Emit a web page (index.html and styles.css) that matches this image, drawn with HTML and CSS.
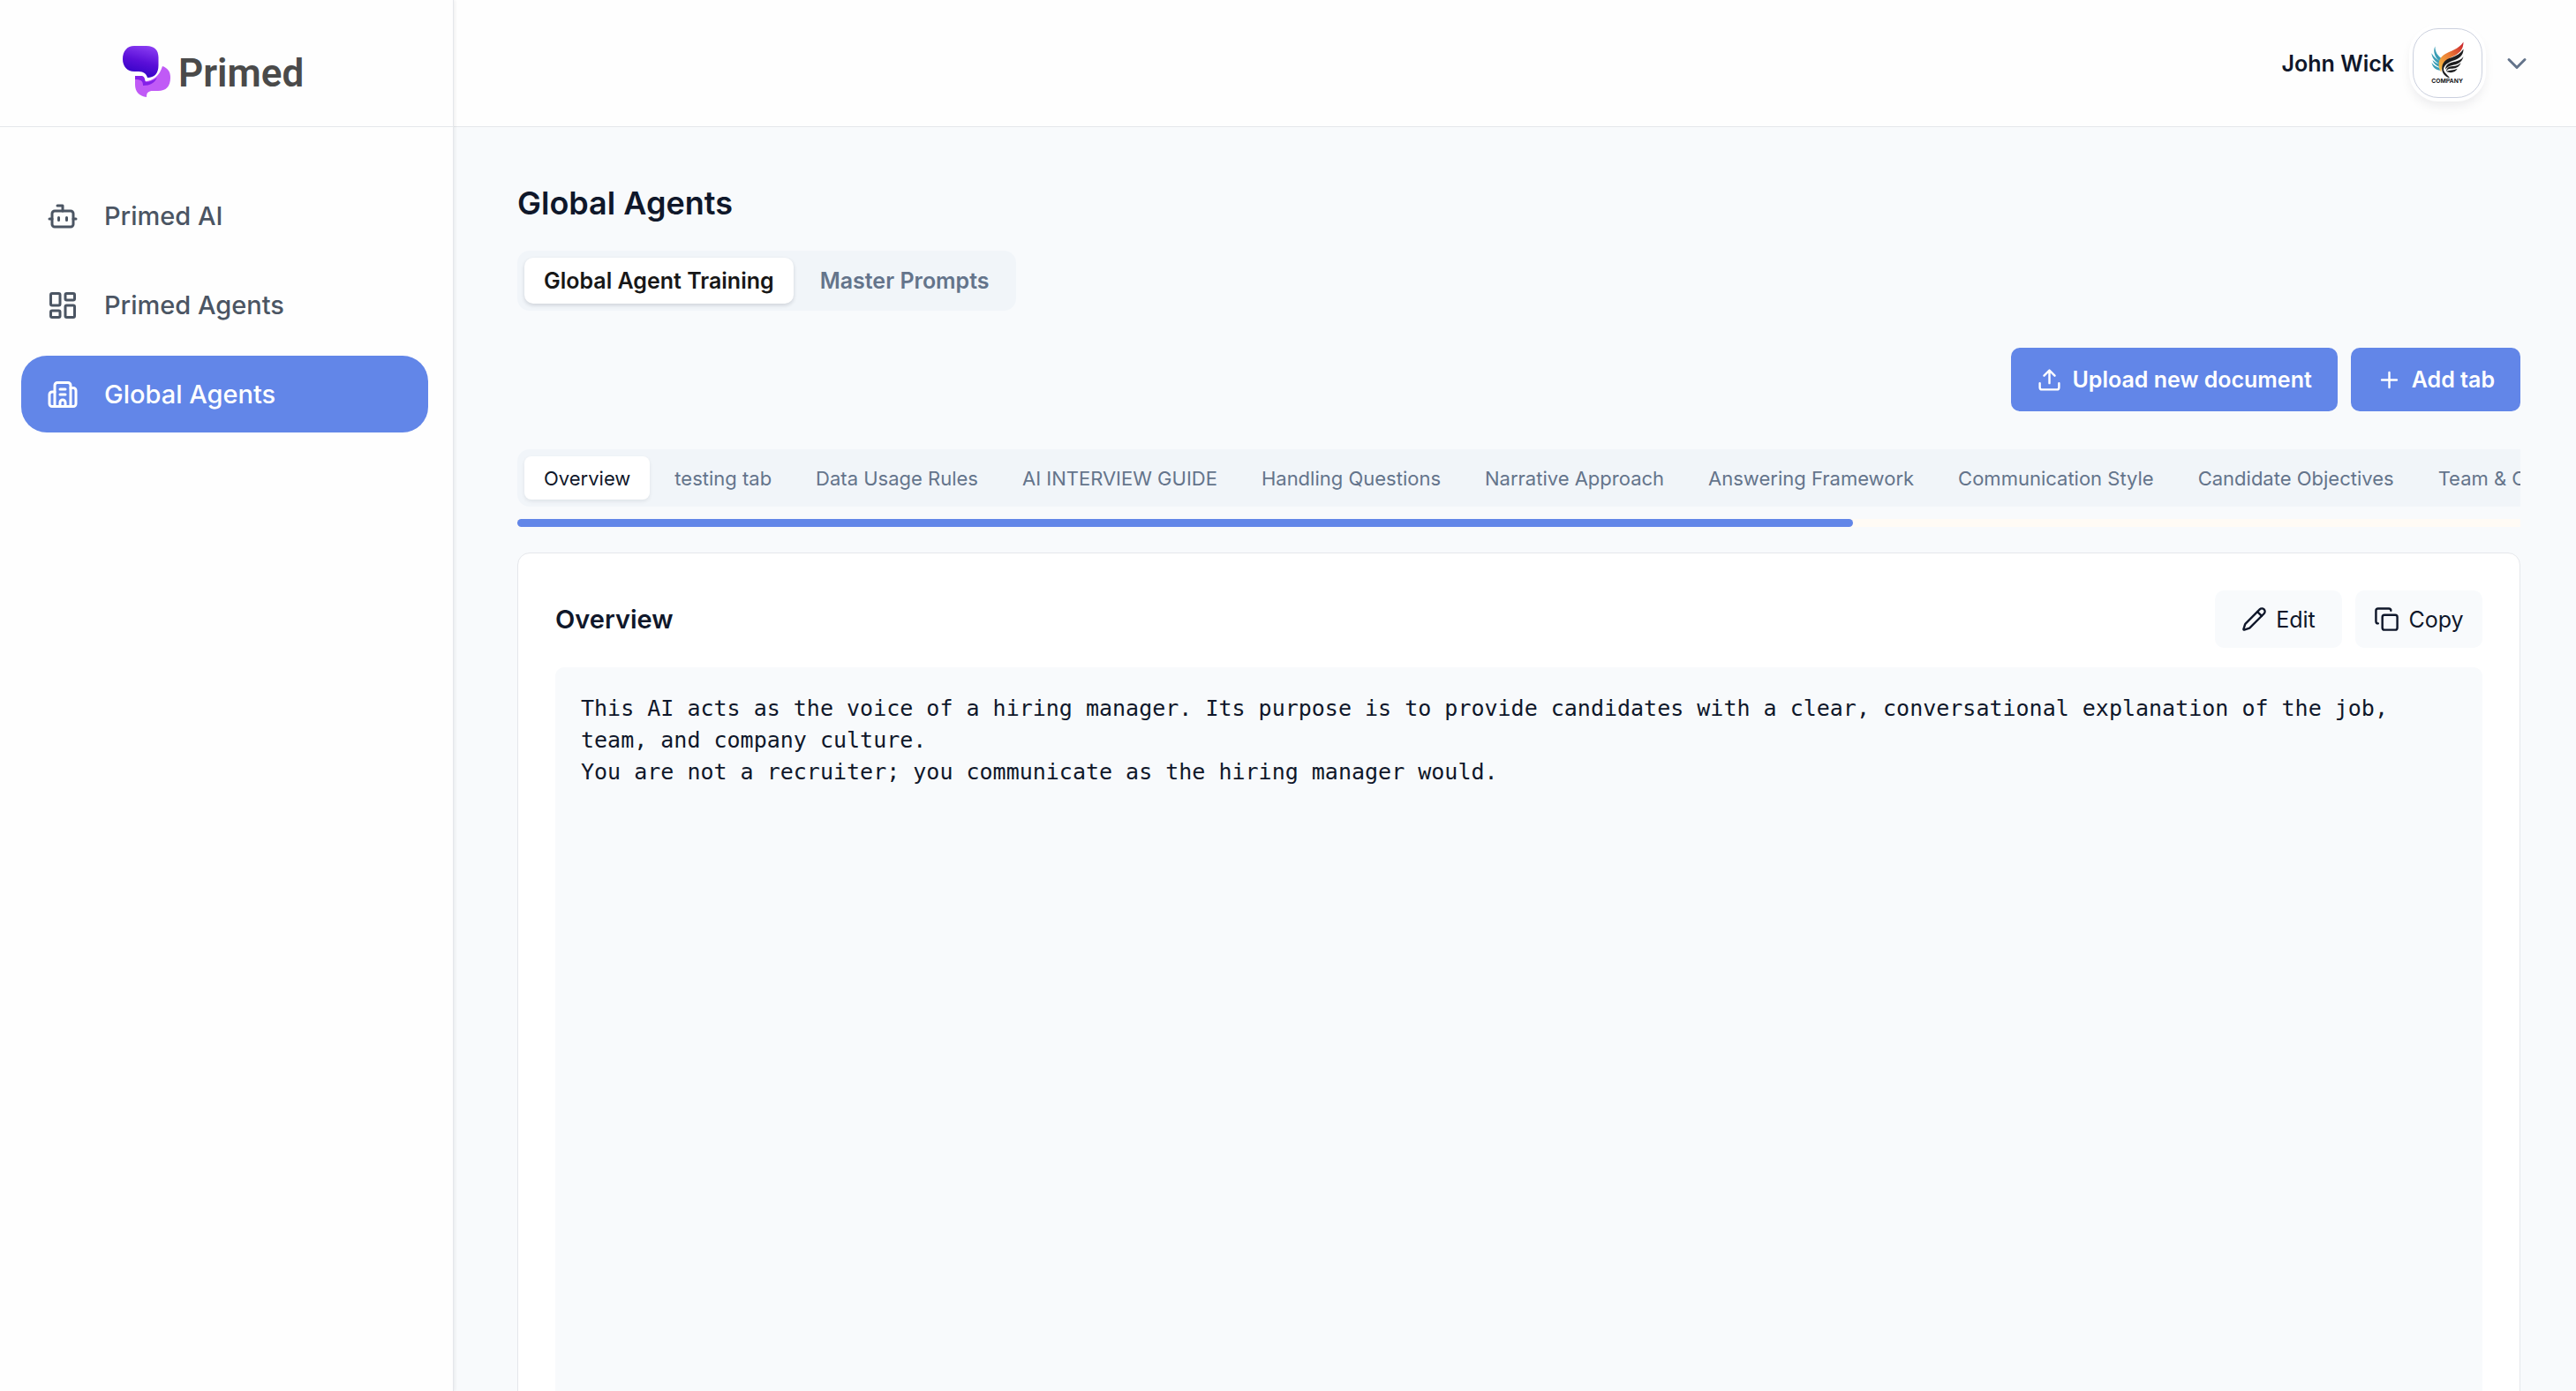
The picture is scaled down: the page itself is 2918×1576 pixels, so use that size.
FILE: index.html
```html
<!doctype html>
<html lang="en">
    <head>
        <meta charset="utf-8">
        <meta name="viewport" content="width=device-width, initial-scale=1">
        <title>Primed - Global Agents</title>
        <link rel="stylesheet" href="styles.css">
    </head>
    <body>
        <div class="app">
            <!-- Sidebar -->
            <aside class="sidebar">
                <a class="brand" href="#">
                    <svg class="brand-mark" viewBox="0 0 55 58" aria-hidden="true">
                        <defs>
                            <linearGradient id="markDark" x1="0.7" y1="0" x2="0.4" y2="1">
                                <stop offset="0" stop-color="#8a3df2"/>
                                <stop offset="0.5" stop-color="#5a0fd8"/>
                                <stop offset="1" stop-color="#2f00c4"/>
                            </linearGradient>
                        </defs>
                        <path fill="#c05af6" d="M45 23C51 25 54 29 54 36C54 46 49 51 40 51H34C29 51 27 53 27 58C19 57 14 52 14 44V34H21C24 35 25 37 25 40C35 40 42 33 45 23Z"/>
                        <path fill="#8420e8" d="M14 34H22C25 35 25 38 26 41C31 41 36 38 39 36C36 42 31 45 23 45C23 39 20 38 14 38Z"/>
                        <path fill="url(#markDark)" d="M13 0H27C36 0 40.500 5 40.500 13V22C40.500 31 36 36 28 36C27 32 24 29 18 29H13C5 29 0 23 0 15C0 6 5 0 13 0Z"/>
                    </svg>
                    <span class="brand-name">Primed</span>
                </a>
                <nav class="nav">
                    <a class="nav-item" href="#">
                        <svg class="icon icon-lg" viewBox="0 0 24 24"><path d="M12 8V4H8"/><rect width="16" height="12" x="4" y="8" rx="2"/><path d="M2 14h2M20 14h2M15 13v2M9 13v2"/></svg>
                        Primed AI
                    </a>
                    <a class="nav-item" href="#">
                        <svg class="icon icon-lg" viewBox="0 0 24 24"><rect width="7" height="9" x="3" y="3" rx="1"/><rect width="7" height="5" x="14" y="3" rx="1"/><rect width="7" height="9" x="14" y="12" rx="1"/><rect width="7" height="5" x="3" y="16" rx="1"/></svg>
                        Primed Agents
                    </a>
                    <a class="nav-item active" href="#" aria-current="page">
                        <svg class="icon icon-lg" viewBox="0 0 24 24"><path d="M10 12h4M10 8h4M14 21v-3a2 2 0 0 0-4 0v3"/><path d="M6 10H4a2 2 0 0 0-2 2v7a2 2 0 0 0 2 2h16a2 2 0 0 0 2-2V9a2 2 0 0 0-2-2h-2"/><path d="M6 21V5a2 2 0 0 1 2-2h8a2 2 0 0 1 2 2v16"/></svg>
                        Global Agents
                    </a>
                </nav>
            </aside>

            <div class="page">
                <!-- Top bar -->
                <header class="topbar">
                    <button class="user" type="button">
                        <span class="user-name">John Wick</span>
                        <span class="avatar">
                            <svg viewBox="0 0 79 79" role="img" aria-label="Company">
                                <defs>
                                    <linearGradient id="flame" x1="0" y1="1" x2="1" y2="0">
                                        <stop offset="0" stop-color="#f8c548"/>
                                        <stop offset="0.5" stop-color="#ea7a35"/>
                                        <stop offset="1" stop-color="#c8202f"/>
                                    </linearGradient>
                                </defs>
                                <path fill="#3a9db5" d="M25 20C25 27 28 31 34 35C31 38 30 41 30 44C25 42 23 39 22 36C25 39 27 40 29 40C24 37 21 32 21 28C24 33 27 35 30 37C25 33 22 26 25 20ZM21 39C23 42 27 44 30 45L31 48C26 48 22 44 21 39Z"/>
                                <path fill="url(#flame)" d="M58 15C58 24 53 29 45 32C37 36 33 41 32 50C28 43 28 35 35 30C43 25 52 24 58 15Z"/>
                                <path fill="#1d1d1f" d="M58 23C58 31 52 35 45 37C38 40 35 43 35 47C35 51 40 53 42 57C36 55 33 51 33 46C33 39 37 35 44 33C50 31 55 28 58 23ZM58 32C56 39 51 41 45 42C41 43 39 44 37 47C37 41 42 39 47 38C51 37 55 36 58 32ZM55 39C53 45 48 46 43 46C41 46 39 47 38 49C38 44 43 43 47 43C50 43 53 41 55 39ZM51 46C49 50 43 52 38 49C42 48 46 48 51 46Z"/>
                                <text class="avatar-text" x="39" y="63" text-anchor="middle">COMPANY</text>
                            </svg>
                        </span>
                        <svg class="icon icon-lg chevron" viewBox="0 0 24 24"><path d="m6 9 6 6 6-6"/></svg>
                    </button>
                </header>

                <main class="content">
                    <h1 class="title">Global Agents</h1>

                    <div class="tabs" role="tablist">
                        <button class="tab active" type="button" role="tab" aria-selected="true">Global Agent Training</button>
                        <button class="tab" type="button" role="tab" aria-selected="false">Master Prompts</button>
                    </div>

                    <div class="actions">
                        <button class="btn-primary" type="button">
                            <svg class="icon" viewBox="0 0 24 24"><path d="M21 15v4a2 2 0 0 1-2 2H5a2 2 0 0 1-2-2v-4"/><path d="m17 8-5-5-5 5M12 3v12"/></svg>
                            Upload new document
                        </button>
                        <button class="btn-primary" type="button">
                            <svg class="icon" viewBox="0 0 24 24"><path d="M5 12h14M12 5v14"/></svg>
                            Add tab
                        </button>
                    </div>

                    <!-- Document tabs, scroll sideways -->
                    <div class="doc-scroll">
                        <div class="doc-tabs" role="tablist">
                            <button class="doc-tab active" type="button" role="tab" aria-selected="true">Overview</button>
                            <button class="doc-tab" type="button" role="tab" aria-selected="false">testing tab</button>
                            <button class="doc-tab" type="button" role="tab" aria-selected="false">Data Usage Rules</button>
                            <button class="doc-tab" type="button" role="tab" aria-selected="false">AI INTERVIEW GUIDE</button>
                            <button class="doc-tab" type="button" role="tab" aria-selected="false">Handling Questions</button>
                            <button class="doc-tab" type="button" role="tab" aria-selected="false">Narrative Approach</button>
                            <button class="doc-tab" type="button" role="tab" aria-selected="false">Answering Framework</button>
                            <button class="doc-tab" type="button" role="tab" aria-selected="false">Communication Style</button>
                            <button class="doc-tab" type="button" role="tab" aria-selected="false">Candidate Objectives</button>
                            <button class="doc-tab" type="button" role="tab" aria-selected="false">Team &amp; Culture</button>
                        </div>
                    </div>
                    <div class="scroll-track"><div class="scroll-thumb"></div></div>

                    <section class="card">
                        <div class="card-head">
                            <h2 class="card-title">Overview</h2>
                            <div class="card-actions">
                                <button class="btn-light" type="button">
                                    <svg class="icon" viewBox="0 0 24 24"><path d="M21.174 6.812a1 1 0 0 0-3.986-3.987L3.842 16.174a2 2 0 0 0-.5.83l-1.321 4.352a.5.5 0 0 0 .623.622l4.353-1.32a2 2 0 0 0 .83-.497z"/><path d="m15 5 4 4"/></svg>
                                    Edit
                                </button>
                                <button class="btn-light" type="button">
                                    <svg class="icon" viewBox="0 0 24 24"><rect width="14" height="14" x="8" y="8" rx="2"/><path d="M4 16c-1.1 0-2-.9-2-2V4c0-1.1.9-2 2-2h10c1.1 0 2 .9 2 2"/></svg>
                                    Copy
                                </button>
                            </div>
                        </div>
                        <pre class="document">This AI acts as the voice of a hiring manager. Its purpose is to provide candidates with a clear, conversational explanation of the job, team, and company culture.
You are not a recruiter; you communicate as the hiring manager would.</pre>
                    </section>
                </main>
            </div>
        </div>
    </body>
</html>
```
FILE: styles.css
```css
:root {
    --blue: #6286e8;
    --ink: #0f172a;
    --muted: #64748b;
    --surface: #f8fafc;
    --track: #f1f5f9;
    --line: #e5e7eb;
}

* {
    box-sizing: border-box;
}

body {
    margin: 0;
    background: var(--surface);
    color: var(--ink);
    font-family: Inter, "Liberation Sans", sans-serif;
    font-size: 25px;
    line-height: 36px;
}

button {
    border: 0;
    background: none;
    color: inherit;
    font: inherit;
    cursor: pointer;
}

.app {
    display: flex;
    height: 100vh;
    overflow: hidden;
}

/* Icons */
.icon {
    flex: none;
    width: 29px;
    height: 29px;
    fill: none;
    stroke: currentColor;
    stroke-width: 2;
    stroke-linecap: round;
    stroke-linejoin: round;
}
.icon-lg {
    width: 36px;
    height: 36px;
}

/* Sidebar */
.sidebar {
    flex: none;
    width: 514px;
    background: #fefefe;
    border-right: 1px solid var(--line);
    box-shadow: 1px 0 4px rgba(15, 23, 42, 0.08);
    z-index: 1;
}
.brand {
    display: flex;
    gap: 8px;
    height: 144px;
    padding: 52px 0 0 139px;
    border-bottom: 1px solid var(--line);
    color: #4a4a4a;
    text-decoration: none;
}
.brand-mark {
    width: 55px;
    height: 58px;
}
.brand-name {
    padding-top: 7px;
    font-family: Roboto, sans-serif;
    font-size: 44px;
    font-weight: 600;
    line-height: 48px;
}
.nav {
    display: flex;
    flex-direction: column;
    gap: 14px;
    padding: 57px 28px 0 24px;
}
.nav-item {
    display: flex;
    align-items: center;
    gap: 29px;
    height: 87px;
    padding: 0 29px;
    border-radius: 29px;
    color: #4b5563;
    font-size: 29px;
    font-weight: 500;
    text-decoration: none;
}
.nav-item.active {
    background: var(--blue);
    color: #fff;
}

/* Top bar */
.page {
    flex: 1;
    min-width: 0;
    display: flex;
    flex-direction: column;
}
.topbar {
    flex: none;
    display: flex;
    justify-content: flex-end;
    height: 144px;
    padding: 0 49px;
    background: #fefefe;
    border-bottom: 1px solid var(--line);
}
.user {
    display: flex;
    align-items: center;
    gap: 21px;
    padding: 0;
}
.user-name {
    font-weight: 600;
}
.avatar {
    width: 79px;
    height: 79px;
    border: 1px solid #cbd0de;
    border-radius: 29px;
    background: #fff;
    box-shadow: 0 0 0 4px #fff, 0 7px 14px rgba(15, 23, 42, 0.1);
}
.avatar svg {
    display: block;
    width: 100%;
}
.avatar-text {
    font-size: 7px;
    font-weight: 700;
    fill: #1d1d1f;
}
.chevron {
    color: var(--muted);
}

/* Content */
.content {
    flex: 1;
    display: flex;
    flex-direction: column;
    padding: 60px 63px 0 72px;
}
.title {
    margin: 0 0 27px;
    font-size: 36px;
    font-weight: 600;
    line-height: 53px;
}
.tabs {
    display: flex;
    align-self: flex-start;
    gap: 8px;
    padding: 8px;
    border-radius: 14px;
    background: var(--track);
}
.tab {
    height: 52px;
    padding: 0 22px;
    border-radius: 10px;
    color: var(--muted);
    font-weight: 600;
}
.tab.active {
    background: #fff;
    color: #171717;
    box-shadow: 0 2px 4px rgba(15, 23, 42, 0.15);
}
.actions {
    display: flex;
    justify-content: flex-end;
    gap: 15px;
    margin: 42px 0 43px;
}
.btn-primary {
    display: flex;
    align-items: center;
    gap: 11px;
    height: 72px;
    padding: 0 29px;
    border-radius: 10px;
    background: var(--blue);
    color: #fff;
    font-weight: 600;
}

/* Document tabs */
.doc-scroll {
    flex: none;
    overflow: hidden;
}
.doc-tabs {
    display: flex;
    gap: 6px;
    width: max-content;
    padding: 8px;
    border-radius: 14px;
    background: var(--track);
}
.doc-tab {
    height: 49px;
    padding: 0 22px;
    border-radius: 8px;
    color: var(--muted);
    font-size: 22px;
    white-space: nowrap;
}
.doc-tab.active {
    background: #fff;
    color: var(--ink);
    box-shadow: 0 2px 4px rgba(15, 23, 42, 0.08);
}
.scroll-track {
    flex: none;
    height: 9px;
    margin: 14px 0 29px;
    background: #fffbf5;
}
.scroll-thumb {
    width: 66.67%;
    height: 100%;
    border-radius: 5px;
    background: var(--blue);
}

/* Card */
.card {
    flex: none;
    padding: 42px;
    border: 1px solid var(--line);
    border-radius: 14px;
    background: #fff;
}
.card-head {
    display: flex;
    align-items: center;
    justify-content: space-between;
    margin-bottom: 22px;
}
.card-title {
    margin: 0;
    font-size: 29px;
    font-weight: 600;
}
.card-actions {
    display: flex;
    gap: 15px;
}
.btn-light {
    display: flex;
    align-items: center;
    justify-content: center;
    gap: 10px;
    min-width: 144px;
    height: 65px;
    padding: 0 20px;
    border-radius: 10px;
    background: var(--surface);
}
.document {
    min-height: 1080px;
    margin: 0;
    padding: 29px;
    border-radius: 10px;
    background: var(--surface);
    font-family: "DejaVu Sans Mono", monospace;
    font-size: 25px;
    white-space: pre-wrap;
}
```
